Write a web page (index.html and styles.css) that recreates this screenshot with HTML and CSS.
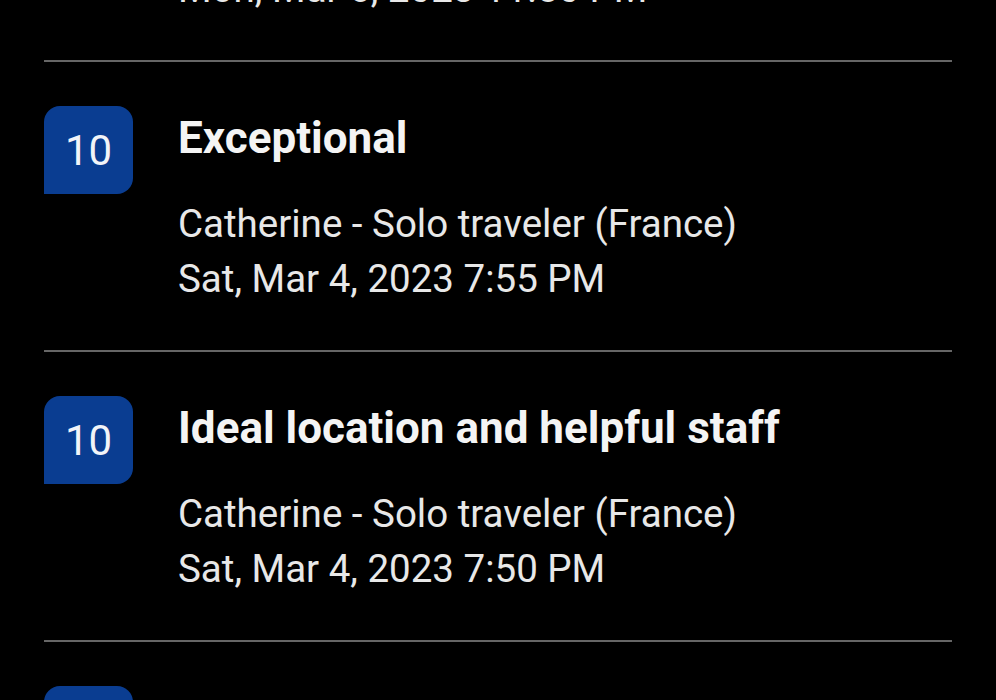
FILE: index.html
```html
<!DOCTYPE html>
<html lang="en">

<head>
    <meta charset="UTF-8">
    <meta name="viewport" content="width=device-width, initial-scale=1.0">
    <title>Reviews</title>
    <link rel="stylesheet" href="styles.css">
</head>

<body>
    <div class="reviews">
        <!-- first review is scrolled mostly out of view -->
        <div class="review">
            <div class="score">10</div>
            <div class="review-body">
                <div class="review-title">Great stay</div>
                <div class="review-meta">Catherine - Solo traveler (France)</div>
                <div class="review-meta">Mon, Mar 6, 2023 11:50 PM</div>
            </div>
        </div>
        <div class="review">
            <div class="score">10</div>
            <div class="review-body">
                <div class="review-title">Exceptional</div>
                <div class="review-meta">Catherine - Solo traveler (France)</div>
                <div class="review-meta">Sat, Mar 4, 2023 7:55 PM</div>
            </div>
        </div>
        <div class="review">
            <div class="score">10</div>
            <div class="review-body">
                <div class="review-title">Ideal location and helpful staff</div>
                <div class="review-meta">Catherine - Solo traveler (France)</div>
                <div class="review-meta">Sat, Mar 4, 2023 7:50 PM</div>
            </div>
        </div>
        <div class="review">
            <div class="score">10</div>
            <div class="review-body">
                <div class="review-title">Very good</div>
                <div class="review-meta">Catherine - Solo traveler (France)</div>
                <div class="review-meta">Sat, Mar 4, 2023 7:45 PM</div>
            </div>
        </div>
    </div>
</body>

</html>
```

FILE: styles.css
```css
*,
*:after {
    box-sizing: border-box;
}

html,
body {
    margin: 0;
    background: #000;
    height: 100%;
    overflow: hidden;
}

body {
    font-family: Roboto, "Liberation Sans", sans-serif;
    color: #fff;
}

/* list scrolled so the first item sits above the window */
.reviews {
    margin-top: -228px;
    padding: 0 44px;
}

.review {
    display: flex;
    align-items: flex-start;
    gap: 45px;
    padding: 44px 0 44px;
    border-bottom: 2px solid #666;
}

.score {
    flex: none;
    width: 89px;
    height: 88px;
    display: flex;
    align-items: center;
    justify-content: center;
    background: #0a3d91;
    border-radius: 16px 16px 16px 0;
    font-size: 42px;
    color: #f2f4f8;
}

.review-body {
    margin-top: 6px;
}

.review-title {
    font-size: 44px;
    font-weight: 700;
    line-height: 52px;
    margin-bottom: 32px;
    color: #f4f4f4;
}

.review-meta {
    font-size: 38.5px;
    line-height: 55px;
    color: #e8e8e8;
}
```
